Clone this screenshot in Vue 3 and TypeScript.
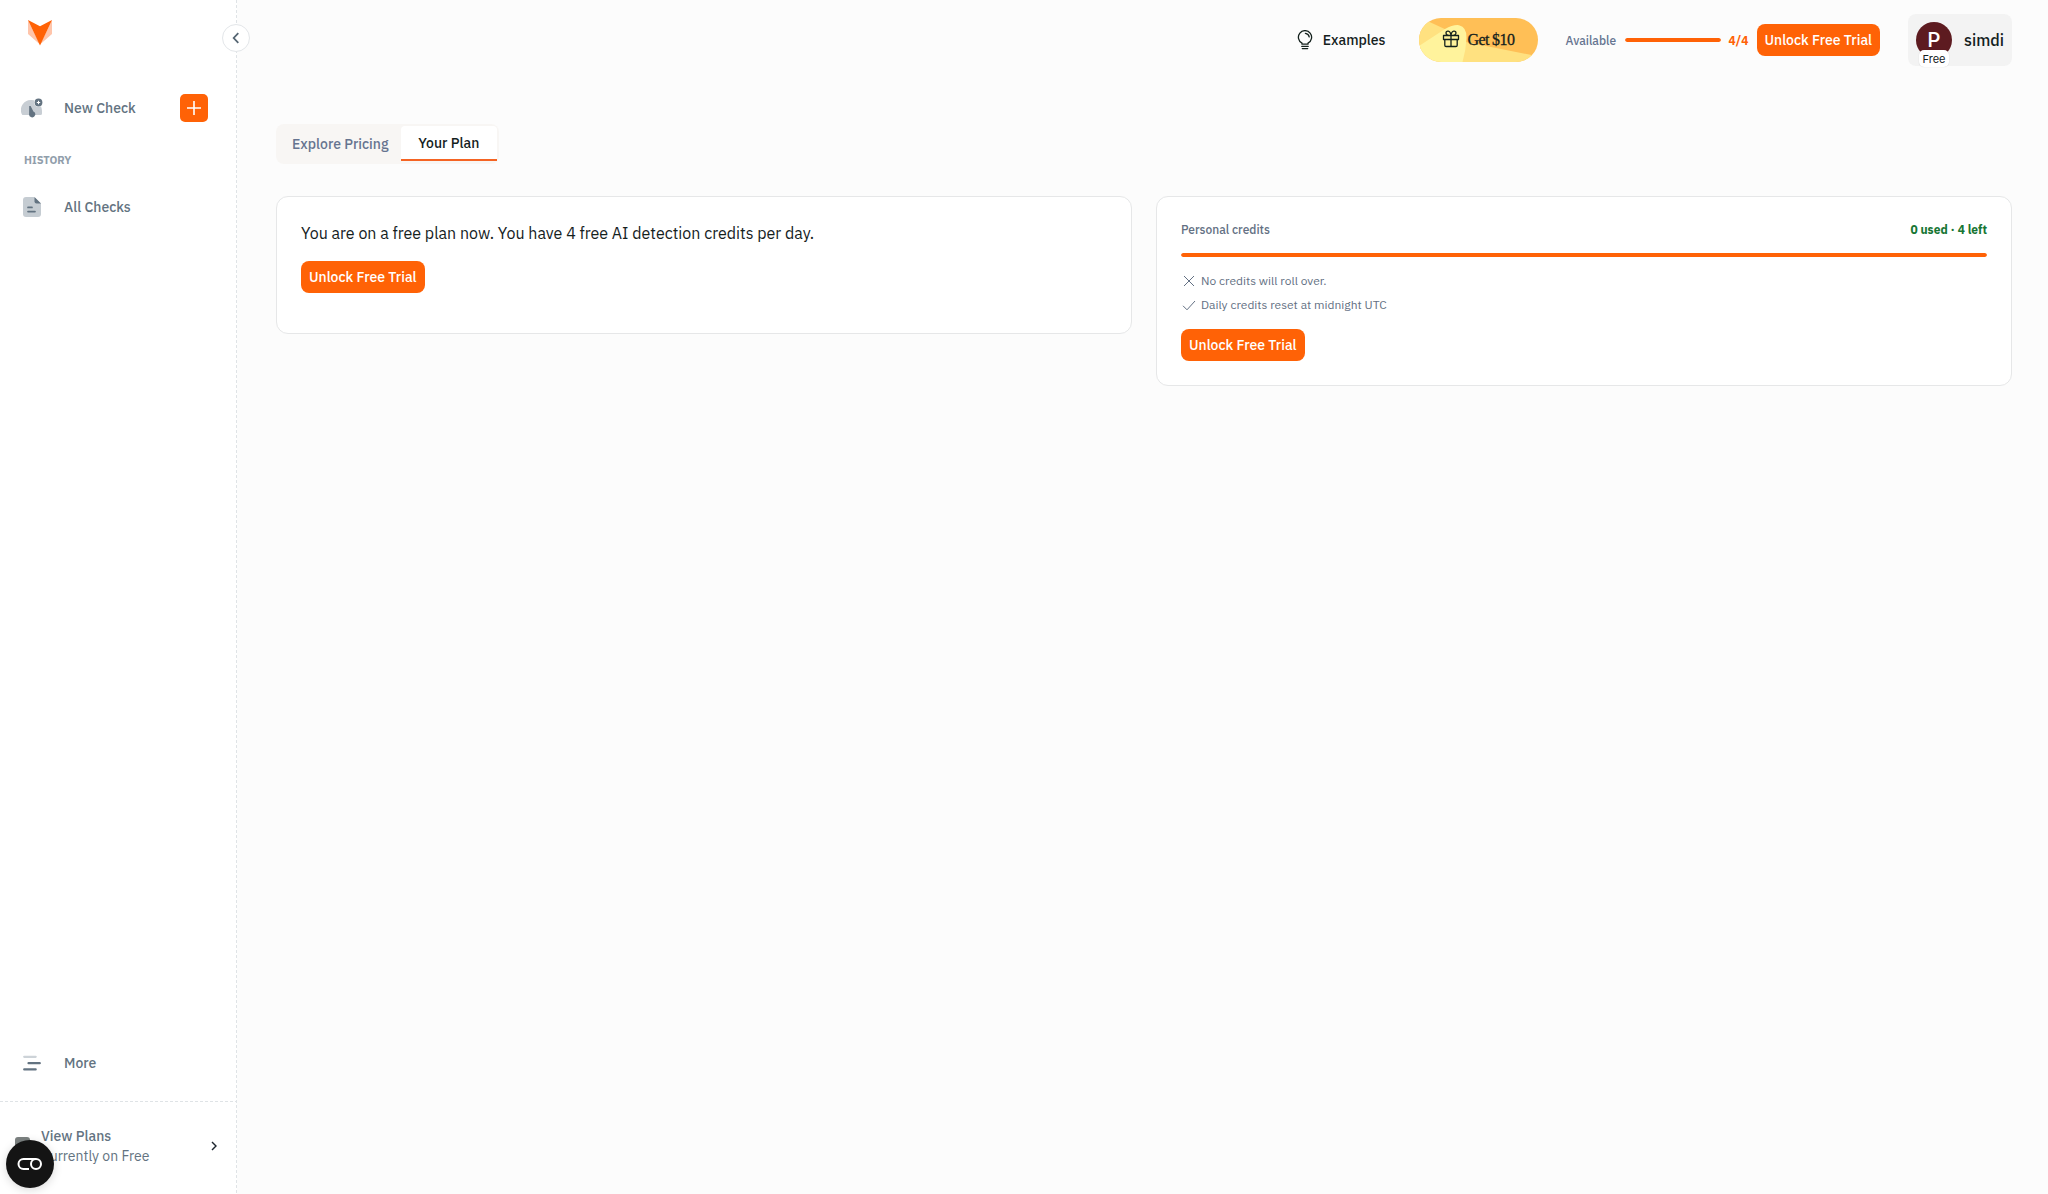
<script setup lang="ts">
import { ref } from 'vue'

const used = ref(0)
const total = ref(4)
const tabs = ['Explore Pricing', 'Your Plan']
const activeTab = ref('Your Plan')
</script>

<template>
  <div class="app">
    <aside class="sidebar">
      <svg class="logo" width="26" height="27" viewBox="0 0 26 27">
        <path d="M1 1v14l12 10.500L1 1zM25 1v14L13 25.500 25 1z" fill="#ffc5ab" />
        <path d="M1 1l12 6.300L25 1 13 26.500z" fill="#ff6206" />
      </svg>
      <button class="toggle" aria-label="Collapse">
        <svg width="8" height="12" viewBox="0 0 8 12"><path d="M6.300 1.200L1.700 6l4.600 4.800" fill="none" stroke="#566673" stroke-width="1.800" /></svg>
      </button>

      <nav class="nav">
        <a class="item new">
          <svg width="22" height="20" viewBox="0 0 22 20">
            <path d="M1 16.500A10 10 0 0 1 10.500 2c6 0 10.500 5 10.500 11v2.500q0 1.500-1.500 1.500H2.200q-1 0-1.200-.5z" fill="#c8ced4" />
            <circle cx="17.500" cy="4.500" r="4.600" fill="#fff" />
            <circle cx="17.500" cy="4.500" r="3.900" fill="#637381" />
            <path d="M17.500 2.800v3.400M15.800 4.500h3.400" stroke="#fff" stroke-width="1" />
            <path d="M8.200 8l1.400 0 2.800 5.500a3.100 3.100 0 1 1-4.300 2.300z" fill="#637381" />
          </svg>
          <span class="label">New Check</span>
          <span class="plus">
            <svg width="28" height="28" viewBox="0 0 28 28"><path d="M14 7v14M7 14h14" stroke="#fff" stroke-width="1.600" /></svg>
          </span>
        </a>
        <div class="section">HISTORY</div>
        <a class="item all">
          <svg width="22" height="20" viewBox="0 0 22 20">
            <path d="M4 0h8l7 6.500V17q0 3-3 3H4q-3 0-3-3V3q0-3 3-3z" fill="#c5ccd2" />
            <path d="M12.500 0L19 6.500h-4.500q-2 0-2-2z" fill="#637381" />
            <path d="M6 10.400h4M6 14.600h7" stroke="#637381" stroke-width="1.700" stroke-linecap="round" />
          </svg>
          <span class="label">All Checks</span>
        </a>
      </nav>

      <a class="item more">
        <svg width="22" height="20" viewBox="0 0 22 20" fill="none" stroke="#637381" stroke-width="2.200" stroke-linecap="round">
          <path d="M2.200 3.800h11.500" stroke="#cdd3d8" />
          <path d="M6.500 10.200h11.300M2.200 16.400h11.500" />
        </svg>
        <span class="label">More</span>
      </a>

      <div class="plans">
        <span class="plan-icon"></span>
        <div class="plan-text">
          <strong>View Plans</strong>
          <span>Currently on Free</span>
        </div>
        <svg class="chevron" width="6" height="10" viewBox="0 0 6 10"><path d="M1 .9L5 5 1 9.100" fill="none" stroke="#1c252e" stroke-width="1.400" /></svg>
      </div>
      <button class="widget" aria-label="Preferences">
        <svg width="26" height="14" viewBox="0 0 26 14" fill="none" stroke="#fff" stroke-width="2">
          <path d="M19 2H6.500a5 5 0 0 0 0 10h5.500" />
          <circle cx="19" cy="7" r="5" />
        </svg>
      </button>
    </aside>

    <main class="main">
      <header class="topbar">
        <a class="examples">
          <svg width="16" height="20" viewBox="0 0 16 20" fill="none" stroke="#14211d" stroke-width="1.300" stroke-linecap="round" stroke-linejoin="round">
            <path d="M5 14.200v-1.100A6.600 6.600 0 1 1 11 13.100v1.100zM4.800 16.400h6.400M5.300 18.600h5.400M8.400 3.300a4.300 4.300 0 0 1 3.800 3.600" />
          </svg>
          <span>Examples</span>
        </a>
        <a class="gift">
          <svg class="gift-bg" width="120" height="44" viewBox="0 0 120 44">
            <rect width="120" height="44" fill="#ffbf56" />
            <path d="M0 0h2l28 13L0 34z" fill="#ffe180" />
            <path d="M42 23l78 15.500V44H42z" fill="#ffe180" />
            <path d="M0 28L26 11q8-4.500 14-3.800 8 2 7.500 12.800Q47 32 43.500 44H0z" fill="#fff39c" />
          </svg>
          <svg class="gift-icon" width="18" height="18" viewBox="0 0 18 18" fill="none" stroke="#14211d" stroke-width="1.300" stroke-linejoin="round">
            <path d="M1.500 5.500h15v4h-15zM2.800 9.500v5.700q0 1.300 1.300 1.300h9.800q1.300 0 1.300-1.300V9.500M9 5.500v11M9 5.500C5.500 5.500 4 4.200 4 2.900 4 1.600 5 .9 6.200 1.100 8 1.400 8.800 3.500 9 5.500c.2-2 1-4.100 2.800-4.400C13 .9 14 1.600 14 2.900c0 1.300-1.500 2.600-5 2.600z" />
          </svg>
          <span>Get $10</span>
        </a>
        <div class="quota">
          <span class="quota-label">Available</span>
          <div class="track"><div class="fill" :style="{ width: ((total - used) / total) * 100 + '%' }"></div></div>
          <strong>{{ total - used }}/{{ total }}</strong>
        </div>
        <button class="cta">Unlock Free Trial</button>
        <div class="user">
          <div class="avatar">P<span class="badge">Free</span></div>
          <span class="name">simdi</span>
        </div>
      </header>

      <div class="tabs">
        <button v-for="tab in tabs" :key="tab" :class="['tab', { active: tab === activeTab }]" @click="activeTab = tab">{{ tab }}</button>
      </div>

      <div class="cards">
        <section class="card plan">
          <p>You are on a free plan now. You have {{ total }} free AI detection credits per day.</p>
          <button class="cta">Unlock Free Trial</button>
        </section>
        <section class="card credits">
          <div class="credit-head">
            <span>Personal credits</span>
            <strong>{{ used }} used · {{ total - used }} left</strong>
          </div>
          <div class="track"><div class="fill" :style="{ width: ((total - used) / total) * 100 + '%' }"></div></div>
          <div class="note first">
            <svg width="16" height="16" viewBox="0 0 16 16"><path d="M3 3l10 10M13 3L3 13" stroke="#637083" stroke-width="1" /></svg>
            <span>No credits will roll over.</span>
          </div>
          <div class="note">
            <svg width="16" height="16" viewBox="0 0 16 16"><path d="M2 8.800l4 4L14 4" fill="none" stroke="#637083" stroke-width="1" /></svg>
            <span>Daily credits reset at midnight UTC</span>
          </div>
          <button class="cta">Unlock Free Trial</button>
        </section>
      </div>
    </main>
  </div>
</template>

<style>
body { background: #fcfcfc; }
</style>

<style scoped>
* { box-sizing: border-box; }
.app { display: flex; width: 100%; height: 1194px; overflow: hidden; font-family: "IBM Plex Sans", Roboto, sans-serif; color: #14211d; background: #fcfcfc; }
button { font: inherit; border: 0; padding: 0; margin: 0; }
svg { display: block; flex: none; }

.sidebar {
  position: relative; flex: none; width: 237px; height: 100%; display: flex; flex-direction: column;
  background: repeating-linear-gradient(to bottom, #dfe3e6 0 3px, transparent 3px 5px) right top / 1px 100% no-repeat, #fff;
}
.logo { margin: 19px 0 0 27px; }
.toggle { position: absolute; left: 222px; top: 24px; width: 28px; height: 28px; border-radius: 50%; border: 1px solid #e3e6e9; background: #fff; display: flex; align-items: center; justify-content: center; }
.nav { margin-top: 42px; }
.item { display: flex; align-items: center; height: 40px; padding-left: 21px; color: #637381; }
.label { margin-left: 21px; font-size: 14px; font-weight: 500; }
.plus { margin-left: auto; margin-right: 29px; width: 28px; height: 28px; border-radius: 5px; background: #ff6206; }
.section { margin-top: 20px; padding-left: 24px; height: 24px; line-height: 24px; font-size: 11px; font-weight: 700; color: #919eab; margin-bottom: 15px; }
.all, .more { padding-left: 22px; }
.all .label, .more .label { margin-left: 20px; }
.more { margin-top: auto; }
.plans { margin-top: 18px; display: flex; height: 93px; padding: 32px 20px 0 15px; background: repeating-linear-gradient(to right, #dfe3e6 0 3px, transparent 3px 5px) left top / 100% 1px no-repeat; }
.plan-icon { width: 15px; height: 14px; margin-top: 4px; border-radius: 3px; background: #7b8180; }
.plan-text { display: flex; flex-direction: column; margin: -7px 0 0 11px; font-size: 14px; line-height: 20px; color: #637381; }
.plan-text strong { font-weight: 500; }
.chevron { margin: 8px 0 0 auto; }
.widget { position: absolute; left: 6px; top: 1140px; width: 48px; height: 48px; border-radius: 50%; background: #141414; box-shadow: 0 2px 10px rgba(0, 0, 0, .15); display: flex; align-items: center; justify-content: center; }

.main { flex: 1; min-width: 0; padding: 0 36px 0 39px; }
.topbar { display: flex; align-items: center; justify-content: flex-end; height: 80px; }
.examples { display: flex; align-items: center; gap: 10px; margin-right: 33px; font-size: 14px; font-weight: 500; }
.gift { position: relative; display: flex; align-items: center; width: 119px; height: 44px; padding-left: 23px; margin-right: 28px; border-radius: 22px; overflow: hidden; }
.gift-bg { position: absolute; inset: 0; }
.gift-icon { position: relative; margin-right: 8px; top: -1px; }
.gift span { position: relative; font-family: "Liberation Serif", serif; font-size: 16px; -webkit-text-stroke: .3px #14211d; letter-spacing: -.62px; white-space: nowrap; }
.quota { display: flex; align-items: center; margin-right: 8px; font-size: 12px; }
.quota-label { width: 51px; font-weight: 500; color: #667490; }
.quota .track { width: 96px; margin: 0 8px; }
.quota strong { width: 20px; color: #ff6206; white-space: nowrap; }
.track { height: 4px; border-radius: 2px; overflow: hidden; background: #ffe6d6; }
.fill { height: 100%; border-radius: 2px; background: #ff6206; }
.cta { display: block; width: 123.500px; height: 32px; border-radius: 8px; background: #ff6206; color: #fff; font-size: 14px; font-weight: 500; white-space: nowrap; }
.user { display: flex; align-items: center; width: 104px; height: 52px; margin-left: 28px; padding-left: 8px; border-radius: 8px; background: #f3f3f3; }
.avatar { position: relative; width: 36px; height: 36px; border-radius: 50%; background: #5d1b20; color: #fff; font: 500 20px/36px Roboto, sans-serif; text-align: center; }
.badge { position: absolute; left: 3px; top: 28px; width: 30px; height: 17px; border-radius: 5px; background: #fff; box-shadow: 0 0 1px rgba(0, 0, 0, .2); color: #14211d; font: 400 11px/18px Inter, sans-serif; }
.name { margin-left: 12px; font-size: 16px; font-weight: 500; }

.tabs { display: flex; width: 223px; height: 40px; margin-top: 44px; padding: 2px; border-radius: 8px; background: #f8f6f4; }
.tab { width: 122.500px; height: 35px; padding-top: 1px; background: none; color: #667490; font-size: 14px; font-weight: 500; padding-left: 2px; }
.tab.active { width: 96.500px; padding: 0; background: #fff; color: #14211d; border-bottom: 2px solid #f56423; border-radius: 4px 4px 0 0; }

.cards { display: grid; grid-template-columns: 1fr 1fr; gap: 24px; margin-top: 32px; align-items: start; }
.card { padding: 24px; border: 1px solid #e6e7e8; border-radius: 12px; background: #fff; }
.plan { height: 138px; }
.plan p { margin: 0 0 16px; font-size: 16px; line-height: 24px; }
.credits { height: 190px; color: #637083; font-size: 12px; }
.credit-head { display: flex; justify-content: space-between; line-height: 18px; font-weight: 500; }
.credit-head strong { color: #177634; }
.credits .track { margin-top: 14px; }
.note { display: flex; align-items: center; height: 24px; gap: 4px; }
.note.first { margin-top: 12px; }
.note span { margin-top: -1px; }
.credits .cta { margin-top: 12px; }
</style>
